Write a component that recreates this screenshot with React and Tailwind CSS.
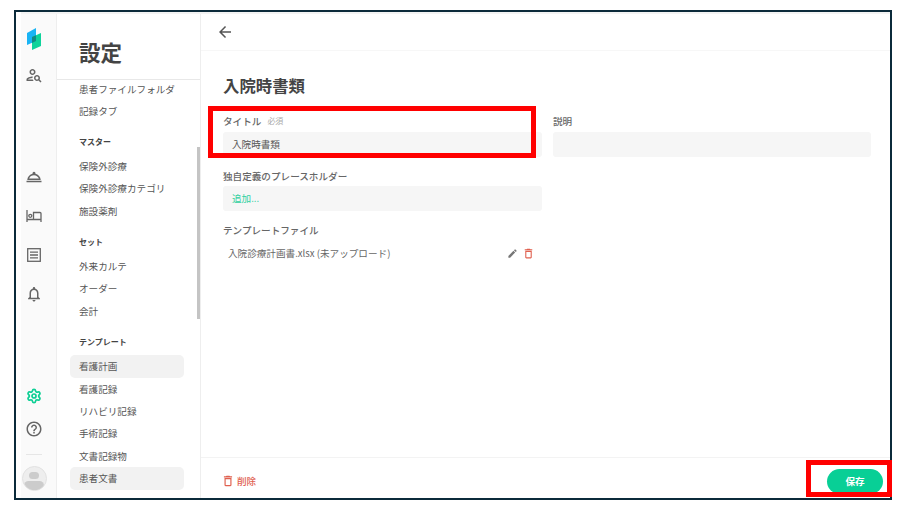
import React from "react";
import {
  MdOutlinePersonSearch,
  MdOutlineRoomService,
  MdOutlineNotifications,
  MdHelpOutline,
  MdArrowBack,
  MdEdit,
  MdOutlineDelete,
} from "react-icons/md";
import { Settings } from "lucide-react";

const font = "[font-family:'Noto_Sans_CJK_JP','Noto_Sans',sans-serif]";

function Logo() {
  return (
    <svg width="14" height="22" viewBox="0 0 14 22" className="block">
      <polygon points="0,5 9,0 9,13 0,17" fill="#19b4f5" />
      <polygon points="5,9 14,5 14,18 5,22" fill="#0ed39b" />
      <polygon points="5,9 9,7.2 9,13 5,15" fill="#118a84" />
    </svg>
  );
}

function BedIcon() {
  return (
    <svg width="16" height="14" viewBox="0 0 16 14" fill="none" stroke="currentColor" strokeWidth="1.3" className="mt-[23px] block shrink-0">
      <path d="M1 1V13" />
      <path d="M1 10.5H15M15 13V4.5a1 1 0 0 0-1-1H7.5V10.5" />
      <circle cx="4.3" cy="6.8" r="1.5" />
    </svg>
  );
}

function ListIcon() {
  return (
    <svg width="14" height="14" viewBox="0 0 14 14" fill="none" stroke="currentColor" strokeWidth="1.3" className="mt-[25px] block shrink-0">
      <rect x="0.7" y="0.7" width="12.6" height="12.6" />
      <path d="M3 4.2H11M3 7H11M3 9.8H11" />
    </svg>
  );
}

function Item({ children, active }) {
  return (
    <div className={`h-[22.4px] ml-[13px] w-[114px] pl-[9px] flex items-center rounded-[5px] text-[9.6px] text-[#555] ${active ? "bg-[#f2f2f2]" : ""}`}>
      {children}
    </div>
  );
}

function Heading({ children, className = "" }) {
  return <div className={`pl-[22px] h-[14px] flex items-center text-[8px] font-bold text-[#444] ${className}`}>{children}</div>;
}

function Label({ children, className = "" }) {
  return <div className={`h-[14px] flex items-center text-[9.6px] font-medium text-[#666] ${className}`}>{children}</div>;
}

export default function App() {
  return (
    <div className={`w-[904px] h-[513px] bg-white pt-[10px] pl-[14px] overflow-hidden relative ${font}`}>
      <div className="w-[878px] h-[490px] border-2 border-[#0b2a3a] flex flex-col overflow-hidden bg-white">
        <div className="h-[2px] ml-[5px] bg-[#f3f3f3] shrink-0" />
        <div className="flex-1 flex min-h-0 pl-[5px]">
          {/* icon rail */}
          <div className="w-[36px] shrink-0 bg-[#fafafa] border-r border-[#eeeeee] flex flex-col items-center pr-[9px] text-[#666]">
            <div className="mt-[14px] h-[22px]"><Logo /></div>
            <MdOutlinePersonSearch className="mt-[16px] text-[18px] shrink-0" />
            <MdOutlineRoomService className="mt-[84px] text-[18px] shrink-0" />
            <BedIcon />
            <ListIcon />
            <MdOutlineNotifications className="mt-[23px] text-[18px] shrink-0" />
            <Settings size={16} strokeWidth={2.6} className="mt-[85px] text-[#0ecf95] shrink-0" />
            <MdHelpOutline className="mt-[16px] text-[18px] shrink-0" />
            <div className="mt-[16px] w-[16px] h-px bg-[#e6e6e6] shrink-0" />
            <div className="mt-[11px] w-[25px] h-[25px] rounded-full bg-[#eeeeee] border border-[#e2e2e2] overflow-hidden flex flex-col items-center shrink-0">
              <div className="mt-[5px] w-[10px] h-[10px] rounded-full bg-[#cccccc]" />
              <div className="mt-[2px] w-[20px] h-[14px] rounded-full bg-[#cccccc]" />
            </div>
          </div>

          {/* settings nav */}
          <div className="w-[144px] shrink-0 border-r border-[#eeeeee] flex flex-col relative overflow-hidden">
            <div className="h-[66px] shrink-0 border-b border-[#e8e8e8] pl-[22px] pt-[24px]">
              <div className="text-[21.5px] leading-[28px] font-bold text-[#444]">設定</div>
            </div>
            <div className="flex-1 -mt-[2.5px]">
              <Item>患者ファイルフォルダ</Item>
              <Item>記録タブ</Item>
              <Heading className="mt-[12.6px] mb-[6.2px]">マスター</Heading>
              <Item>保険外診療</Item>
              <Item>保険外診療カテゴリ</Item>
              <Item>施設薬剤</Item>
              <Heading className="mt-[12.6px] mb-[6.2px]">セット</Heading>
              <Item>外来カルテ</Item>
              <Item>オーダー</Item>
              <Item>会計</Item>
              <Heading className="mt-[12.6px] mb-[6.4px]">テンプレート</Heading>
              <Item active>看護計画</Item>
              <Item>看護記録</Item>
              <Item>リハビリ記録</Item>
              <Item>手術記録</Item>
              <Item>文書記録物</Item>
              <Item active>患者文書</Item>
            </div>
            <div className="absolute right-0 top-[133px] w-[3px] h-[172px] bg-[#c4c4c4]" />
          </div>

          {/* main */}
          <div className="flex-1 flex flex-col min-w-0">
            <div className="h-[37px] shrink-0 border-b border-[#f7f7f7] pl-[15px] flex items-center text-[#555]">
              <MdArrowBack className="text-[18px]" />
            </div>
            <div className="flex-1 pl-[22px] pr-[19px] pt-[22px]">
              <div className="text-[16.4px] leading-[24px] font-bold text-[#444]">入院時書類</div>
              <div className="mt-[17px] flex gap-[11px]">
                <div className="w-[319px] shrink-0">
                  <div className="flex items-center">
                    <Label>タイトル</Label>
                    <span className="ml-[6px] text-[8px] text-[#aaa]">必須</span>
                  </div>
                  <div className="mt-[4px] h-[25px] rounded-[3px] bg-[#f6f6f6] pl-[9px] flex items-center text-[9.6px] text-[#555]">入院時書類</div>
                  <Label className="mt-[12px]">独自定義のプレースホルダー</Label>
                  <div className="mt-[3px] h-[25px] rounded-[3px] bg-[#f6f6f6] pl-[9px] flex items-center text-[9.6px] text-[#2fd0a0]">追加...</div>
                  <Label className="mt-[12px]">テンプレートファイル</Label>
                  <div className="mt-[6px] h-[20px] pl-[5px] pr-[7px] flex items-center text-[9.6px] text-[#666]">
                    <span className="flex-1">入院診療計画書.xlsx (未アップロード)</span>
                    <MdEdit className="text-[11px] text-[#777]" />
                    <MdOutlineDelete className="ml-[4px] text-[13px] text-[#e0604f]" />
                  </div>
                </div>
                <div className="w-[318px] shrink-0">
                  <Label>説明</Label>
                  <div className="mt-[4px] h-[25px] rounded-[3px] bg-[#f6f6f6]" />
                </div>
              </div>
            </div>
            <div className="h-[41px] shrink-0 border-t border-[#f3f3f3] pl-[20px] pr-[7px] flex items-center justify-between">
              <div className="flex items-center text-[9.6px] font-medium text-[#e0604f] mt-[7px]">
                <MdOutlineDelete className="text-[14px] mr-[2px]" />
                削除
              </div>
              <div className="w-[56px] h-[25px] mt-[7px] rounded-full bg-[#08cf96] text-white text-[9.6px] font-bold flex items-center justify-center">保存</div>
            </div>
          </div>
        </div>
      </div>

      {/* red annotation boxes */}
      <div className="absolute left-[208px] top-[106px] w-[328px] h-[52px] border-[5px] border-[#ff0000]" />
      <div className="absolute left-[806px] top-[460px] w-[86px] h-[37px] border-[5px] border-[#ff0000]" />
    </div>
  );
}
